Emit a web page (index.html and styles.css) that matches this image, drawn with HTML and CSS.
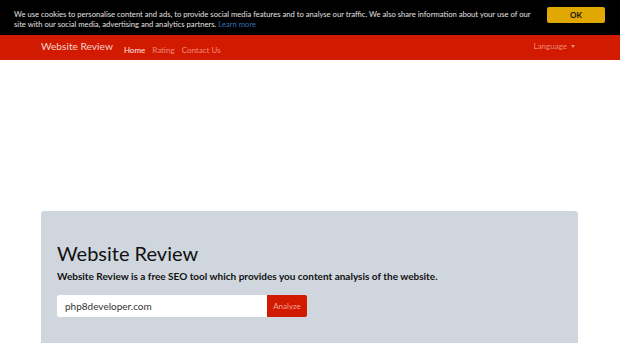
FILE: index.html
```html
<!DOCTYPE html>
<html lang="en">
<head>
    <meta charset="UTF-8">
    <meta name="viewport" content="width=device-width, initial-scale=1.0">
    <title>Website Review</title>
    <link rel="stylesheet" href="styles.css">
</head>
<body>
    <div class="cookie-bar">
        <p class="cookie-text">
            We use cookies to personalise content and ads, to provide social media features and to analyse our traffic. We also share information about your use of our<br>
            site with our social media, advertising and analytics partners. <a href="#">Learn more</a>
        </p>
        <button class="cookie-ok">OK</button>
    </div>

    <nav class="navbar">
        <div class="nav-inner">
            <a href="/" class="brand">Website Review</a>
            <ul class="nav-links">
                <li><a href="/" class="active">Home</a></li>
                <li><a href="/rating">Rating</a></li>
                <li><a href="/contact">Contact Us</a></li>
            </ul>
            <a href="#" class="nav-lang">Language <span class="caret"></span></a>
        </div>
    </nav>

    <div class="ad-space"></div>

    <div class="jumbotron">
        <h1>Website Review</h1>
        <p class="lead">Website Review is a free SEO tool which provides you content analysis of the website.</p>
        <form class="review-form">
            <input type="text" class="domain-input" value="php8developer.com">
            <button type="submit" class="btn-analyze">Analyze</button>
        </form>
    </div>
</body>
</html>
```

FILE: styles.css
```css
* {
    margin: 0;
    padding: 0;
    box-sizing: border-box;
}

body {
    font-family: Lato, "Open Sans", sans-serif;
    background: #fff;
    color: #212529;
    overflow: hidden;
    height: 343px;
}

.cookie-bar {
    background: #000;
    height: 35px;
    display: flex;
    align-items: flex-start;
    justify-content: space-between;
    padding: 7px 15px 0 14px;
}

.cookie-text {
    color: #e0e0e0;
    font-size: 7.65px;
    line-height: 10px;
    margin-top: 2px;
    white-space: nowrap;
    min-width: 0;
}

.cookie-text a {
    color: #2f6fb3;
    text-decoration: none;
}

.cookie-ok {
    flex: none;
    width: 58px;
    height: 16px;
    background: #e0a800;
    border: none;
    border-radius: 2px;
    font-family: inherit;
    font-weight: 700;
    font-size: 8px;
    color: #111;
}

.navbar {
    background: #d21a00;
    height: 25px;
}

.nav-inner {
    display: flex;
    align-items: center;
    height: 100%;
    padding: 0 45px 3px 41px;
}

.brand {
    color: #f7d4cc;
    text-decoration: none;
    font-size: 10.2px;
    margin-right: 11px;
}

.nav-links {
    display: flex;
    list-style: none;
    gap: 7px;
}

.nav-links a {
    color: #f08a78;
    text-decoration: none;
    font-size: 8px;
}

.nav-links a.active {
    color: #fbe6e2;
}

.nav-lang {
    margin-left: auto;
    color: #f08a78;
    text-decoration: none;
    font-size: 8px;
    display: flex;
    align-items: center;
    gap: 4px;
}

.caret {
    width: 0;
    height: 0;
    border-left: 2.5px solid transparent;
    border-right: 2.5px solid transparent;
    border-top: 3px solid #f08a78;
}

.ad-space {
    height: 151px;
}

.jumbotron {
    margin: 0 42px 0 41px;
    background: #d0d6de;
    border-radius: 3px 3px 0 0;
    padding: 30px 16px 0;
    height: 132px;
}

.jumbotron h1 {
    font-weight: 400;
    font-size: 20px;
    line-height: 25px;
    color: #111;
}

.lead {
    font-size: 10px;
    font-weight: 700;
    line-height: 14px;
    color: #111;
    margin-top: 3px;
}

.review-form {
    display: flex;
    margin-top: 12px;
}

.domain-input {
    width: 210px;
    height: 22px;
    border: none;
    border-radius: 2px 0 0 2px;
    background: #fff;
    padding: 0 8px;
    font-family: inherit;
    font-size: 10px;
    color: #333;
}

.btn-analyze {
    width: 40px;
    height: 22px;
    background: #d21a00;
    border: none;
    border-radius: 0 2px 2px 0;
    color: #f5a595;
    font-family: inherit;
    font-size: 8px;
}
```
